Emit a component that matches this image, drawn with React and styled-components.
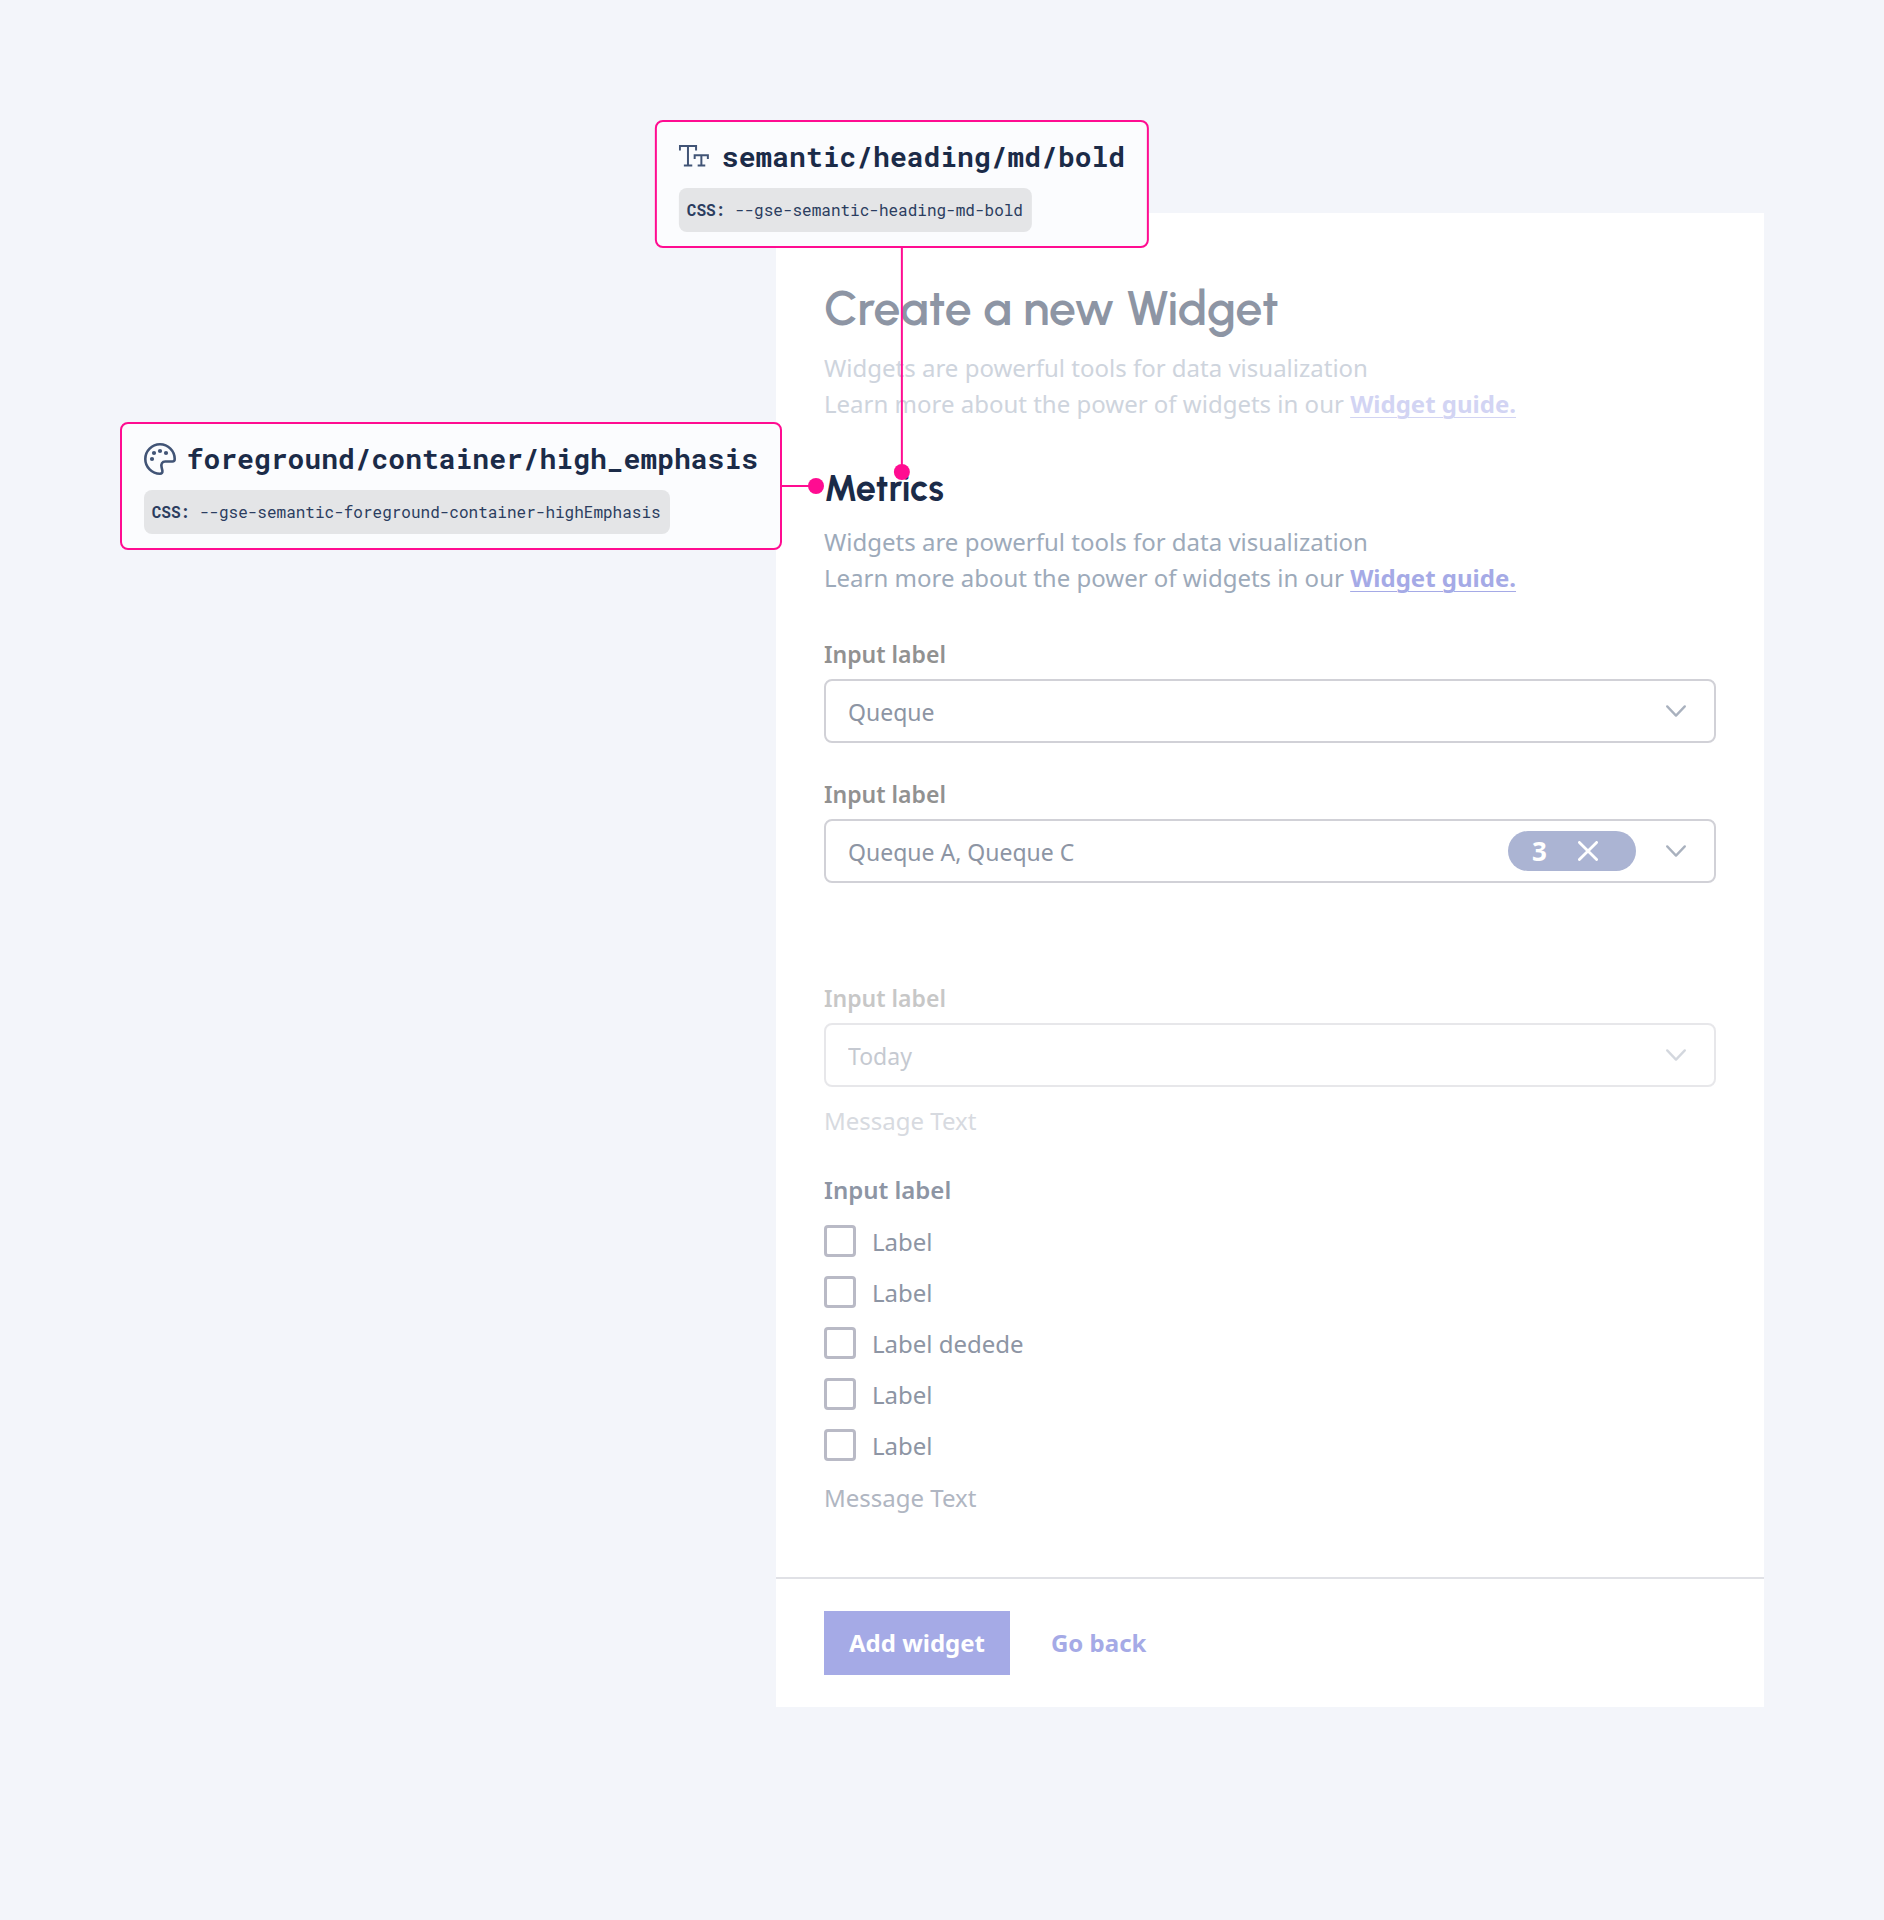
import { useId } from 'react'
import styled, { createGlobalStyle } from 'styled-components'

const GlobalStyle = createGlobalStyle`
  *, *::before, *::after {
    box-sizing: border-box;
  }
  body {
    margin: 0;
    background: #f3f5fa;
    font-family: 'Noto Sans', sans-serif;
    font-size: 24px;
    line-height: 36px;
  }
  h1, h2, p, fieldset, legend {
    margin: 0;
    padding: 0;
    border: 0;
  }
`

const Stage = styled.main`
  display: grid;
  grid-template-columns: 656px 1fr;
  padding: 213px 120px;
`

const Panel = styled.form`
  grid-column: 2;
  background: #ffffff;
`

const Body = styled.div`
  display: flex;
  flex-direction: column;
  padding: 63px 48px 61px;
`

const Title = styled.h1`
  margin-bottom: 10px;
  color: #8d95a4;
  font-family: Urbanist, Lato, sans-serif;
  font-size: 48px;
  font-weight: 600;
  line-height: 64px;
`

const Intro = styled.p`
  color: ${({ $faded }) => ($faded ? '#ced4dd' : '#9daaba')};
`

const GuideLink = styled.a`
  color: ${({ $faded }) => ($faded ? '#d2d4f3' : '#a5aae6')};
  font-weight: 700;
  text-decoration: underline;
  text-decoration-thickness: 1px;
  text-underline-offset: 4px;
`

const Section = styled.section`
  position: relative;
  margin: 43px 0 40px;
`

const SectionTitle = styled.h2`
  margin-bottom: 11px;
  color: #1b2b48;
  font-family: Urbanist, Lato, sans-serif;
  font-size: 36px;
  font-weight: 700;
  line-height: 48px;
`

const Fields = styled.div`
  display: flex;
  flex-direction: column;
  gap: 33px;
`

const FieldBox = styled.div`
  display: flex;
  flex-direction: column;
  gap: 7px;
  margin-top: ${({ $apart }) => ($apart ? '64px' : '0')};
  opacity: ${({ $faded }) => ($faded ? 0.5 : 1)};
`

const FieldLabel = styled.label`
  color: #919191;
  font-size: 23px;
  font-weight: 600;
`

const Control = styled.div`
  display: grid;
  align-items: center;

  > * {
    grid-area: 1 / 1;
  }
`

const Select = styled.select`
  appearance: none;
  width: 100%;
  height: 64px;
  padding: 2px 64px 0 22px;
  border: 2px solid #d1d1d7;
  border-radius: 8px;
  background: #ffffff;
  color: #8d95a4;
  font: inherit;
  font-size: 23px;
`

const Adornments = styled.div`
  display: flex;
  align-items: center;
  justify-self: end;
  gap: 30px;
  margin-right: 30px;
  pointer-events: none;
`

const Pill = styled.button`
  display: flex;
  align-items: center;
  gap: 31px;
  width: 128px;
  height: 40px;
  padding: 0 24px;
  border: 0;
  border-radius: 20px;
  background: #abb4d3;
  color: #ffffff;
  font: inherit;
  font-size: 26px;
  font-weight: 700;
  pointer-events: auto;
`

const Message = styled.p`
  margin-top: ${({ $gap }) => $gap}px;
  color: #b0b6c2;
`

const Checks = styled.fieldset`
  display: flex;
  flex-direction: column;
  gap: 15px;
  min-width: 0;
`

const Legend = styled.legend`
  margin-bottom: 15px;
  color: #8d95a4;
  font-weight: 600;
`

const CheckLabel = styled.label`
  display: flex;
  align-items: center;
  gap: 16px;
  color: #8d95a4;

  span {
    padding-top: 2px;
    line-height: 34px;
  }
`

const Checkbox = styled.input`
  appearance: none;
  width: 32px;
  height: 32px;
  margin: 0;
  border: 3px solid #b9bac6;
  border-radius: 4px;

  &:checked {
    background: #a5aae6;
  }
`

const Footer = styled.footer`
  display: flex;
  gap: 16px;
  padding: 32px 48px;
  border-top: 2px solid #e0e1e6;
`

const Button = styled.button`
  height: 64px;
  padding: 0 25px;
  border: 0;
  background: ${({ $primary }) => ($primary ? '#a5aae6' : 'transparent')};
  color: ${({ $primary }) => ($primary ? '#ffffff' : '#a5aae6')};
  font: inherit;
  font-weight: 700;
`

// Callouts float over the page and are anchored to the section they describe
const Callout = styled.aside`
  position: absolute;
  padding: 16px 22px 14px;
  border: 2px solid #ff0c91;
  border-radius: 8px;
  background: #fbfcfe;
  color: #1b2b48;
  font-family: 'Roboto Mono', 'DejaVu Sans Mono', monospace;
  white-space: nowrap;

  &::before,
  &::after {
    content: '';
    position: absolute;
    background: #ff0c91;
  }
  &::after {
    width: 16px;
    height: 16px;
    border-radius: 50%;
  }
`

const TopCallout = styled(Callout)`
  bottom: calc(100% + 217px);
  left: 78px;
  transform: translateX(-50%);

  &::before {
    top: 100%;
    left: calc(50% - 1px);
    width: 2px;
    height: 226px;
  }
  &::after {
    top: calc(100% + 218px);
    left: calc(50% - 8px);
  }
`

const LeftCallout = styled(Callout)`
  top: -43px;
  right: calc(100% + 42px);

  &::before {
    top: calc(50% - 1px);
    left: 100%;
    width: 36px;
    height: 2px;
  }
  &::after {
    top: calc(50% - 8px);
    left: calc(100% + 28px);
  }
`

const TokenName = styled.div`
  display: flex;
  align-items: center;
  gap: 11px;
  height: 38px;
  margin-bottom: 12px;
  font-size: 28px;
  font-weight: 700;
  line-height: 36px;
`

const Code = styled.div`
  width: fit-content;
  padding: 0 9px 0 8px;
  border-radius: 8px;
  background: #e4e5e7;
  color: #2b3d60;
  font-size: 16px;
  line-height: 44px;
`

function TypeIcon() {
  return (
    <svg width="32" height="32" viewBox="0 0 32 32" fill="none" stroke="#415476" strokeWidth="2" aria-hidden="true">
      <path d="M1 9.6V5H17.2V9.6M9.1 5V24.6M5 24.6H13.4" />
      <path d="M15.8 18V14.2H29V18M22.5 14.2V24.6M18.8 24.6H26.4" />
    </svg>
  )
}

function PaletteIcon() {
  return (
    <svg width="32" height="32" viewBox="0 0 32 32" fill="none" stroke="#415476" strokeWidth="2.6" strokeLinejoin="round" aria-hidden="true">
      <path d="M16 1.3A14.7 14.7 0 1 0 16 30.7C17.8 30.7 18.6 29.6 18.4 27.8L17.6 24.2C16.8 20.8 18.2 18.5 21.2 18.5H28.4C30 18.5 30.7 17.6 30.7 16A14.7 14.7 0 0 0 16 1.3Z" />
      <g fill="#415476" stroke="none">
        <circle cx="8" cy="16" r="2.1" />
        <circle cx="10" cy="10" r="2.1" />
        <circle cx="16" cy="8" r="2.1" />
        <circle cx="22" cy="10" r="2.1" />
      </g>
    </svg>
  )
}

function Chevron() {
  return (
    <svg width="20" height="14" viewBox="0 0 20 14" fill="none" stroke="#a9b1be" strokeWidth="2.3" strokeLinecap="round" strokeLinejoin="round" aria-hidden="true">
      <path d="M1.2 2.4L10 11.6L18.8 2.4" />
    </svg>
  )
}

function Cross() {
  return (
    <svg width="20" height="20" viewBox="0 0 20 20" stroke="#ffffff" strokeWidth="2.8" strokeLinecap="round" aria-hidden="true">
      <path d="M1.4 1.4L18.6 18.6M18.6 1.4L1.4 18.6" />
    </svg>
  )
}

function Token({ as: Box, icon, name, variable }) {
  return (
    <Box>
      <TokenName>
        {icon}
        {name}
      </TokenName>
      <Code>
        <b>CSS:</b> {variable}
      </Code>
    </Box>
  )
}

function Field({ value, count, message, faded, apart }) {
  const id = useId()

  return (
    <FieldBox $faded={faded} $apart={apart}>
      <FieldLabel htmlFor={id}>Input label</FieldLabel>
      <Control>
        <Select id={id} defaultValue={value}>
          <option>{value}</option>
        </Select>
        <Adornments>
          {count && (
            <Pill type="button" aria-label={`${count} selected, clear`}>
              {count}
              <Cross />
            </Pill>
          )}
          <Chevron />
        </Adornments>
      </Control>
      {message && <Message $gap={9}>{message}</Message>}
    </FieldBox>
  )
}

function Description({ faded }) {
  return (
    <Intro $faded={faded}>
      Widgets are powerful tools for data visualization
      <br />
      Learn more about the power of widgets in our{' '}
      <GuideLink href="#guide" $faded={faded}>
        Widget guide.
      </GuideLink>
    </Intro>
  )
}

const options = ['Label', 'Label', 'Label dedede', 'Label', 'Label']

function App() {
  return (
    <Stage>
      <GlobalStyle />
      <Panel>
        <Body>
          <Title>Create a new Widget</Title>
          <Description faded />
          <Section>
            <SectionTitle>Metrics</SectionTitle>
            <Description />
            <Token
              as={TopCallout}
              icon={<TypeIcon />}
              name="semantic/heading/md/bold"
              variable="--gse-semantic-heading-md-bold"
            />
            <Token
              as={LeftCallout}
              icon={<PaletteIcon />}
              name="foreground/container/high_emphasis"
              variable="--gse-semantic-foreground-container-highEmphasis"
            />
          </Section>
          <Fields>
            <Field value="Queque" />
            <Field value="Queque A, Queque C" count={3} />
            <Field value="Today" message="Message Text" faded apart />
            <Checks>
              <Legend>Input label</Legend>
              {options.map((option, index) => (
                <CheckLabel key={index}>
                  <Checkbox type="checkbox" />
                  <span>{option}</span>
                </CheckLabel>
              ))}
              <Message $gap={2}>Message Text</Message>
            </Checks>
          </Fields>
        </Body>
        <Footer>
          <Button type="button" $primary>
            Add widget
          </Button>
          <Button type="button">Go back</Button>
        </Footer>
      </Panel>
    </Stage>
  )
}

export default App
